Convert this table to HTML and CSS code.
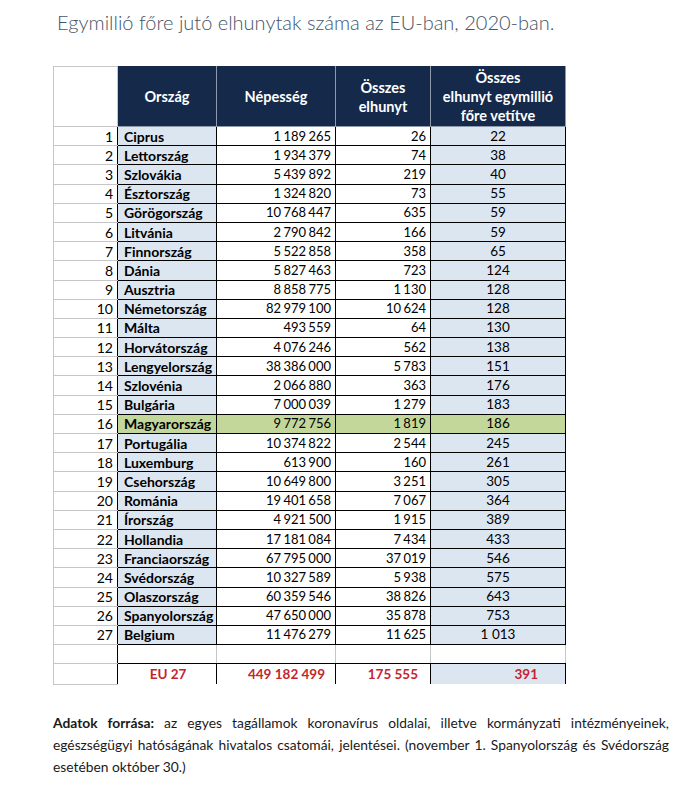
FILE: index.html
```html
<!DOCTYPE html>
<html lang="hu">
<head>
<meta charset="utf-8">
<title>Egymillió főre jutó elhunytak száma az EU-ban, 2020-ban</title>
<link rel="stylesheet" href="styles.css">
</head>
<body>
<h1 class="title">Egymillió főre jutó elhunytak száma az EU-ban, 2020-ban.</h1>
<table class="data">
<colgroup><col class="w-n"><col class="w-c"><col class="w-p"><col class="w-d"><col class="w-r"></colgroup>
<thead>
<tr><th class="corner"></th><th>Ország</th><th>Népesség</th><th>Összes<br>elhunyt</th><th>Összes<br>elhunyt egymillió<br>főre vetítve</th></tr>
</thead>
<tbody>
<tr><td class="n">1</td><td class="c">Ciprus</td><td class="p">1 189 265</td><td class="d">26</td><td class="r">22</td></tr>
<tr><td class="n">2</td><td class="c">Lettország</td><td class="p">1 934 379</td><td class="d">74</td><td class="r">38</td></tr>
<tr><td class="n">3</td><td class="c">Szlovákia</td><td class="p">5 439 892</td><td class="d">219</td><td class="r">40</td></tr>
<tr><td class="n">4</td><td class="c">Észtország</td><td class="p">1 324 820</td><td class="d">73</td><td class="r">55</td></tr>
<tr><td class="n">5</td><td class="c">Görögország</td><td class="p">10 768 447</td><td class="d">635</td><td class="r">59</td></tr>
<tr><td class="n">6</td><td class="c">Litvánia</td><td class="p">2 790 842</td><td class="d">166</td><td class="r">59</td></tr>
<tr><td class="n">7</td><td class="c">Finnország</td><td class="p">5 522 858</td><td class="d">358</td><td class="r">65</td></tr>
<tr><td class="n">8</td><td class="c">Dánia</td><td class="p">5 827 463</td><td class="d">723</td><td class="r">124</td></tr>
<tr><td class="n">9</td><td class="c">Ausztria</td><td class="p">8 858 775</td><td class="d">1 130</td><td class="r">128</td></tr>
<tr><td class="n">10</td><td class="c">Németország</td><td class="p">82 979 100</td><td class="d">10 624</td><td class="r">128</td></tr>
<tr><td class="n">11</td><td class="c">Málta</td><td class="p">493 559</td><td class="d">64</td><td class="r">130</td></tr>
<tr><td class="n">12</td><td class="c">Horvátország</td><td class="p">4 076 246</td><td class="d">562</td><td class="r">138</td></tr>
<tr><td class="n">13</td><td class="c">Lengyelország</td><td class="p">38 386 000</td><td class="d">5 783</td><td class="r">151</td></tr>
<tr><td class="n">14</td><td class="c">Szlovénia</td><td class="p">2 066 880</td><td class="d">363</td><td class="r">176</td></tr>
<tr><td class="n">15</td><td class="c">Bulgária</td><td class="p">7 000 039</td><td class="d">1 279</td><td class="r">183</td></tr>
<tr class="hl"><td class="n">16</td><td class="c">Magyarország</td><td class="p">9 772 756</td><td class="d">1 819</td><td class="r">186</td></tr>
<tr><td class="n">17</td><td class="c">Portugália</td><td class="p">10 374 822</td><td class="d">2 544</td><td class="r">245</td></tr>
<tr><td class="n">18</td><td class="c">Luxemburg</td><td class="p">613 900</td><td class="d">160</td><td class="r">261</td></tr>
<tr><td class="n">19</td><td class="c">Csehország</td><td class="p">10 649 800</td><td class="d">3 251</td><td class="r">305</td></tr>
<tr><td class="n">20</td><td class="c">Románia</td><td class="p">19 401 658</td><td class="d">7 067</td><td class="r">364</td></tr>
<tr><td class="n">21</td><td class="c">Írország</td><td class="p">4 921 500</td><td class="d">1 915</td><td class="r">389</td></tr>
<tr><td class="n">22</td><td class="c">Hollandia</td><td class="p">17 181 084</td><td class="d">7 434</td><td class="r">433</td></tr>
<tr><td class="n">23</td><td class="c">Franciaország</td><td class="p">67 795 000</td><td class="d">37 019</td><td class="r">546</td></tr>
<tr><td class="n">24</td><td class="c">Svédország</td><td class="p">10 327 589</td><td class="d">5 938</td><td class="r">575</td></tr>
<tr><td class="n">25</td><td class="c">Olaszország</td><td class="p">60 359 546</td><td class="d">38 826</td><td class="r">643</td></tr>
<tr><td class="n">26</td><td class="c">Spanyolország</td><td class="p">47 650 000</td><td class="d">35 878</td><td class="r">753</td></tr>
<tr><td class="n">27</td><td class="c">Belgium</td><td class="p">11 476 279</td><td class="d">11 625</td><td class="r">1 013</td></tr>
<tr class="gap"><td class="n"></td><td class="c"></td><td class="p"></td><td class="d"></td><td class="r"></td></tr>
<tr class="total"><td class="n"></td><td class="c">EU 27</td><td class="p">449 182 499</td><td class="d">175 555</td><td class="r">391</td></tr>
</tbody>
</table>
<p class="note"><b>Adatok forrása:</b> az egyes tagállamok koronavírus oldalai, illetve kormányzati intézményeinek, egészségügyi hatóságának hivatalos csatomái, jelentései. (november 1. Spanyolország és Svédország esetében október 30.)</p>
</body>
</html>
```
FILE: styles.css
```css
html, body {
  margin: 0;
  padding: 0;
  background: #ffffff;
}
body {
  font-family: Lato, "Open Sans", sans-serif;
  color: #000;
}
.title {
  margin: 0;
  padding: 10px 0 0 57px;
  font-size: 20px;
  line-height: 24px;
  font-weight: 300;
  color: #44546a;
}
.data {
  margin: 32px 0 0 53px;
  border-collapse: collapse;
  table-layout: fixed;
  width: 512px;
  font-size: 13px;
}
.w-n { width: 64px; }
.w-c { width: 99px; }
.w-p { width: 119px; }
.w-d { width: 95px; }
.w-r { width: 135px; }

.data th {
  height: 59px;
  padding: 0 1px;
  background: #15294a;
  color: #ffffff;
  font-size: 14.5px;
  font-weight: 700;
  line-height: 19px;
  text-align: center;
  border: 1px solid #8e99ab;
  border-top-color: #15294a;
}
.data th.corner {
  background: #ffffff;
  border: 1px solid #c6c6c6;
  border-right-color: #c6c6c6;
}
.data tbody tr { height: 19.2px; }
.data td {
  padding: 0 4px;
  line-height: 17px;
  border: 1px solid #000;
  white-space: nowrap;
}
.data td.n {
  font-size: 14px;
  text-align: right;
  padding-right: 4px;
  border-top-color: #c6c6c6;
  border-bottom-color: #c6c6c6;
  border-left-color: #c6c6c6;
  border-right-color: #000;
}
.data td.c {
  background: #dce6f1;
  font-size: 14px;
  font-weight: 700;
  padding-left: 6px;
}
.data td.p, .data td.d {
  text-align: right;
  word-spacing: -1px;
}
.data td.r {
  background: #dce6f1;
  font-size: 13.5px;
  text-align: center;
}
.data tr.hl td.c,
.data tr.hl td.p,
.data tr.hl td.d,
.data tr.hl td.r {
  background: #c4d79b;
}
.data tr.gap td {
  background: #ffffff;
  border-color: #000 #c6c6c6 #000 #c6c6c6;
}
.data tr.gap td.n {
  border-color: #c6c6c6 #000 #c6c6c6 #c6c6c6;
}
.data tr.gap td.c {
  border-left-color: #000;
}
.data tr.gap td.r {
  border-right-color: #c6c6c6;
}
.data tr.total { height: 21px; }
.data tr.total td {
  color: #c3262c;
  font-size: 13.5px;
  font-weight: 700;
  border-bottom-color: #ffffff;
}
.data tr.total td.n {
  color: #000;
  border-bottom-color: #c6c6c6;
}
.data tr.total td.c {
  background: #ffffff;
  text-align: center;
}
.data tr.total td.p { padding-right: 10px; word-spacing: 0; }
.data tr.total td.d { padding-right: 12px; word-spacing: 0; }
.data tr.total td.r {
  text-align: right;
  padding-right: 27px;
}
.note {
  margin: 27px 0 0 53px;
  width: 616px;
  font-size: 13.8px;
  line-height: 22px;
  text-align: justify;
  color: #1a1a1a;
}
.note b { font-weight: 700; }
```
